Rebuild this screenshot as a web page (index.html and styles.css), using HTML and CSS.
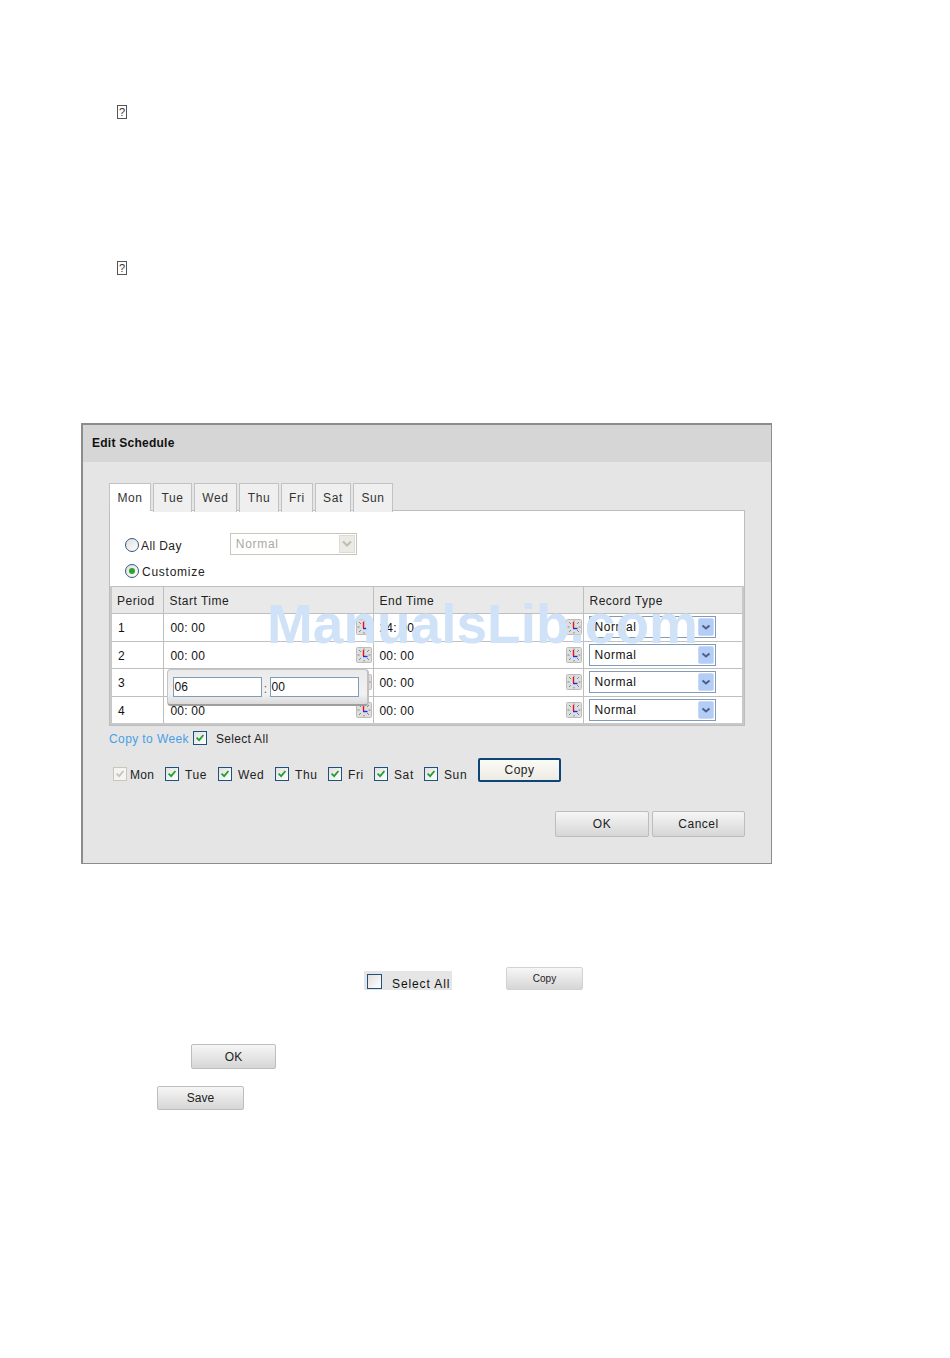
FILE: index.html
```html
<!DOCTYPE html>
<html lang="en">
<head>
<meta charset="utf-8">
<title>Edit Schedule</title>
<link rel="stylesheet" href="styles.css">
</head>
<body>
<svg class="defs" width="0" height="0" aria-hidden="true">
  <symbol id="clock" viewBox="0 0 16 16">
    <rect x="0.500" y="0.500" width="15" height="15" rx="1" fill="#dedede" stroke="#bcbcbc"/>
    <path d="M8 1.500v1.500M8 13v1.500M1.500 8h2M12.500 8h2M3 3l2 2M13 3l-2 2M3 13l2-2M13 13l-2-2" stroke="#858585" stroke-width="1" fill="none"/>
    <path d="M7.500 3v6" stroke="#f01010" stroke-width="1.400" fill="none"/>
    <path d="M7 9.500h4.500" stroke="#1030f0" stroke-width="1.400" fill="none"/>
  </symbol>
  <symbol id="check" viewBox="0 0 14 14">
    <path d="M3 6.500l3 3 5-6" stroke="currentColor" stroke-width="2" fill="none"/>
  </symbol>
  <symbol id="chev" viewBox="0 0 16 18">
    <rect x="0.500" y="0.500" width="15" height="17" rx="1.500" fill="#b4cdf6" stroke="#c8d9f6"/>
    <path d="M4.500 7.500l3.500 3 3.500-3" stroke="#4d6185" stroke-width="2" fill="none"/>
  </symbol>
</svg>
<main class="page">
  <div class="note note-one"><span class="note-icon">?</span></div>
  <div class="note note-two"><span class="note-icon">?</span></div>

  <section class="dialog">
    <h1 class="dialog-title">Edit Schedule</h1>
    <div class="dialog-body">
      <div class="tabs">
        <div class="tab tab-active">Mon</div>
        <div class="tab">Tue</div>
        <div class="tab">Wed</div>
        <div class="tab">Thu</div>
        <div class="tab">Fri</div>
        <div class="tab">Sat</div>
        <div class="tab">Sun</div>
      </div>
      <div class="panel">
        <div class="mode-row mode-all">
          <span class="radio"></span><span class="mode-label">All Day</span>
          <div class="select select-off"><span>Normal</span><span class="off-arrow"><svg class="off-chev" viewBox="0 0 12 8"><path d="M2 1.500l4 4 4-4" stroke="#bdbdb4" stroke-width="2" fill="none"/></svg></span></div>
        </div>
        <div class="mode-row mode-custom">
          <span class="radio radio-on"></span><span class="mode-label">Customize</span>
        </div>
        <table class="grid">
          <thead>
            <tr><th class="c-period">Period</th><th class="c-time">Start Time</th><th class="c-time">End Time</th><th>Record Type</th></tr>
          </thead>
          <tbody>
            <tr>
              <td>1</td>
              <td><div class="time"><span class="time-text">00: 00</span><svg class="clock"><use href="#clock"/></svg></div></td>
              <td><div class="time"><span class="time-text">24: 00</span><svg class="clock"><use href="#clock"/></svg></div></td>
              <td><div class="select"><span>Normal</span><svg class="chev"><use href="#chev"/></svg></div></td>
            </tr>
            <tr>
              <td>2</td>
              <td><div class="time"><span class="time-text">00: 00</span><svg class="clock"><use href="#clock"/></svg></div></td>
              <td><div class="time"><span class="time-text">00: 00</span><svg class="clock"><use href="#clock"/></svg></div></td>
              <td><div class="select"><span>Normal</span><svg class="chev"><use href="#chev"/></svg></div></td>
            </tr>
            <tr>
              <td>3</td>
              <td class="popup-cell"><div class="time"><span class="time-text">00: 00</span><svg class="clock"><use href="#clock"/></svg></div>
                <div class="popup"><span class="popup-input">06</span><span class="popup-colon">:</span><span class="popup-input">00</span></div>
              </td>
              <td><div class="time"><span class="time-text">00: 00</span><svg class="clock"><use href="#clock"/></svg></div></td>
              <td><div class="select"><span>Normal</span><svg class="chev"><use href="#chev"/></svg></div></td>
            </tr>
            <tr>
              <td>4</td>
              <td><div class="time"><span class="time-text">00: 00</span><svg class="clock"><use href="#clock"/></svg></div></td>
              <td><div class="time"><span class="time-text">00: 00</span><svg class="clock"><use href="#clock"/></svg></div></td>
              <td><div class="select"><span>Normal</span><svg class="chev"><use href="#chev"/></svg></div></td>
            </tr>
          </tbody>
        </table>
      </div>
      <div class="copy-head">
        <span class="copy-link">Copy to Week</span>
        <span class="box"><svg class="tick"><use href="#check"/></svg></span>
        <span class="select-all">Select All</span>
      </div>
      <div class="days">
        <div class="day"><span class="box box-off"><svg class="tick"><use href="#check"/></svg></span><span class="day-mon">Mon</span></div>
        <div class="day"><span class="box"><svg class="tick"><use href="#check"/></svg></span><span>Tue</span></div>
        <div class="day"><span class="box"><svg class="tick"><use href="#check"/></svg></span><span>Wed</span></div>
        <div class="day"><span class="box"><svg class="tick"><use href="#check"/></svg></span><span>Thu</span></div>
        <div class="day"><span class="box"><svg class="tick"><use href="#check"/></svg></span><span>Fri</span></div>
        <div class="day"><span class="box"><svg class="tick"><use href="#check"/></svg></span><span>Sat</span></div>
        <div class="day"><span class="box"><svg class="tick"><use href="#check"/></svg></span><span>Sun</span></div>
        <button class="btn btn-copy" type="button">Copy</button>
      </div>
      <div class="actions">
        <button class="btn btn-ok" type="button">OK</button>
        <button class="btn btn-cancel" type="button">Cancel</button>
      </div>
    </div>
  </section>

  <div class="inline-row">
    <div class="chip"><span class="box box-empty"></span><span class="chip-label">Select All</span></div>
    <button class="btn btn-small-copy" type="button">Copy</button>
  </div>
  <div class="solo solo-ok"><button class="btn btn-solo-ok" type="button">OK</button></div>
  <div class="solo solo-save"><button class="btn btn-save" type="button">Save</button></div>

  <div class="watermark">ManualsLib.com</div>
</main>
</body>
</html>
```

FILE: styles.css
```css
* { box-sizing: border-box; }
html, body { margin: 0; padding: 0; background: #fff; }
body { font-family: "Liberation Sans", Arial, sans-serif; font-size: 12px; color: #111; }
.defs { position: absolute; }
.page { position: relative; width: 950px; height: 1358px; padding-top: 105px; overflow: hidden; }

.note { margin-left: 117px; height: 14px; display: flex; }
.note-two { margin-top: 142px; }
.note-icon { width: 10px; height: 14px; border: 1px solid #555; font-size: 11px; line-height: 12px; text-align: center; color: #333; }

.dialog { margin: 148px 0 0 81px; width: 691px; height: 441px; border: 1px solid #8c8c8c; border-width: 2px 1px 1px 2px; background: #e5e5e5; display: flex; flex-direction: column; }
.dialog-title { margin: 0; height: 37px; background: #d6d6d6; padding-left: 9px; font-size: 12px; line-height: 36px; font-weight: bold; color: #111; letter-spacing: 0.25px; }
.dialog-body { padding: 21px 26px 0 26px; }

.tabs { display: grid; grid-template-columns: 42px 39px 43px 40px 32px 36px 40px; column-gap: 2px; height: 27px; position: relative; z-index: 1; }
.tab { background: #efefef; border: 1px solid #c2c2c2; border-bottom: 0; text-align: center; font-size: 12px; line-height: 28px; letter-spacing: 0.6px; color: #333; }
.tab-active { background: #fff; height: 28px; }

.panel { width: 636px; height: 216px; background: #fff; border: 1px solid #bdbdbd; padding-top: 22px; }
.mode-row { display: flex; align-items: center; padding-left: 15px; height: 24px; }
.mode-custom { margin: 1px 0 2px; height: 26px; }
.mode-label { margin-left: 2px; font-size: 12px; letter-spacing: 0.4px; color: #222; padding-top: 2px; }
.mode-custom .mode-label { margin-left: 3px; letter-spacing: 0.75px; }
.radio { width: 14px; height: 14px; border-radius: 50%; border: 1px solid #32587e; background: linear-gradient(135deg, #dedede, #fff); flex: none; position: relative; }
.radio-on::after { content: ""; position: absolute; left: 3px; top: 3px; width: 6px; height: 6px; border-radius: 50%; background: #2da32d; }

.select { width: 127px; height: 22px; border: 1px solid #7f9db9; display: flex; align-items: center; justify-content: space-between; padding: 0 1px 0 5px; background: #fff; font-size: 12px; letter-spacing: 0.55px; color: #111; }
.select-off { margin-left: 48px; margin-top: -3px; border-color: #c9c7ba; color: #aaa9a0; letter-spacing: 0.7px; }
.off-arrow { width: 16px; height: 18px; background: #ebebe4; border: 1px solid #ddddd6; display: flex; align-items: center; justify-content: center; }
.off-chev { width: 12px; height: 8px; }
.chev { width: 16px; height: 18px; }

.grid { border-collapse: collapse; table-layout: fixed; width: 634px; border: 2px solid #c8c8c8; border-width: 1px 2px 2px 2px; }
.grid th, .grid td { border: 1px solid #bfbfbf; padding: 0 0 0 5px; text-align: left; font-weight: normal; font-size: 12px; }
.grid th { height: 27px; background: #e9e9e9; padding-top: 1px; color: #222; letter-spacing: 0.5px; }
.grid th:nth-child(n+2) { padding-left: 6px; }
.grid td { height: 27.600px; color: #111; letter-spacing: 0.2px; }
.grid td:first-child { padding: 2px 0 0 6px; }
.grid td:nth-child(2) { padding-left: 7px; }
.grid td:nth-child(3) { padding-left: 6px; }
.c-period { width: 52px; }
.c-time { width: 210px; }
.time { display: flex; align-items: center; justify-content: space-between; }
.time-text { padding-top: 2px; }
.clock { width: 16px; height: 16px; margin-right: 1px; flex: none; }

.popup-cell { position: relative; }
.popup { position: absolute; left: 3px; top: 0; width: 202px; height: 37px; z-index: 2; display: flex; align-items: center; padding: 0 8px 0 5px; border: 1px solid #c4c4c4; border-bottom: 2px solid #9e9e9e; border-right: 2px solid #c0c0c0; border-radius: 4px; background: linear-gradient(#eaeaea, #f2f2f2 70%, #dadada); }
.popup-input { flex: none; width: 89px; height: 20px; border: 1px solid #7f9db9; background: #fff; padding-left: 1px; font-size: 12px; line-height: 19px; color: #111; }
.popup-colon { width: 10px; text-align: center; color: #555; padding-top: 3px; }

.copy-head { display: flex; align-items: center; height: 20px; margin-top: 2px; }
.copy-link { color: #4a9fe6; font-size: 12px; letter-spacing: 0.4px; width: 84px; white-space: nowrap; padding-top: 1px; }
.select-all { margin-left: 9px; letter-spacing: 0.3px; color: #222; padding-top: 1px; }
.box { width: 14px; height: 14px; flex: none; border: 1px solid #1c5180; background: linear-gradient(135deg, #e0e0e0, #fff); color: #1f9e2a; display: block; }
.tick { width: 12px; height: 12px; display: block; }
.box-off { border-color: #c9c7ba; background: #f4f4f0; color: #c5c4bb; }
.box-empty { width: 15px; height: 15px; margin-top: 2px; }

.days { display: grid; grid-template-columns: 52px 53px 57px 53px 46px 50px 54px 83px; margin: 10px 0 0 4px; height: 28px; }
.day { display: flex; align-items: flex-start; padding-top: 9px; letter-spacing: 0.6px; color: #222; }
.day > span:last-child { margin-left: 6px; margin-top: 1px; line-height: 14px; }
.day > span.day-mon { margin-left: 3px; letter-spacing: 0.35px; }

.btn { font-family: "Liberation Sans", Arial, sans-serif; font-size: 12px; color: #222; letter-spacing: 0.5px; padding: 0; border: 1px solid #bdbdbd; border-radius: 2px; background: linear-gradient(#f6f6f6, #d6d6d6); display: block; }
.btn-copy { width: 83px; height: 24px; border: 2px solid #0e4479; background: linear-gradient(#fbfbf6, #ecebe3); }
.actions { display: flex; gap: 3px; margin: 25px 0 0 446px; }
.btn-ok { width: 94px; height: 26px; }
.btn-cancel { width: 93px; height: 26px; }

.inline-row { display: flex; align-items: flex-end; margin: 103px 0 0 364px; height: 23px; }
.chip { width: 88px; height: 19px; background: #e5e5e5; display: flex; align-items: center; padding-left: 3px; }
.chip-label { margin-left: 10px; padding-top: 7px; letter-spacing: 0.9px; color: #111; }
.btn-small-copy { margin-left: 54px; width: 77px; height: 23px; font-size: 10px; letter-spacing: 0; border-color: #d2d2d2; padding-bottom: 0; }
.solo { display: flex; }
.solo-ok { margin: 54px 0 0 191px; }
.solo-save { margin: 17px 0 0 157px; }
.btn-solo-ok { width: 85px; height: 25px; letter-spacing: 0; }
.btn-save { width: 87px; height: 24px; letter-spacing: 0; }

.watermark { position: absolute; left: 267px; top: 593px; z-index: 5; font-size: 55px; line-height: 62px; font-weight: bold; color: #cfe2f8; white-space: nowrap; }
```
